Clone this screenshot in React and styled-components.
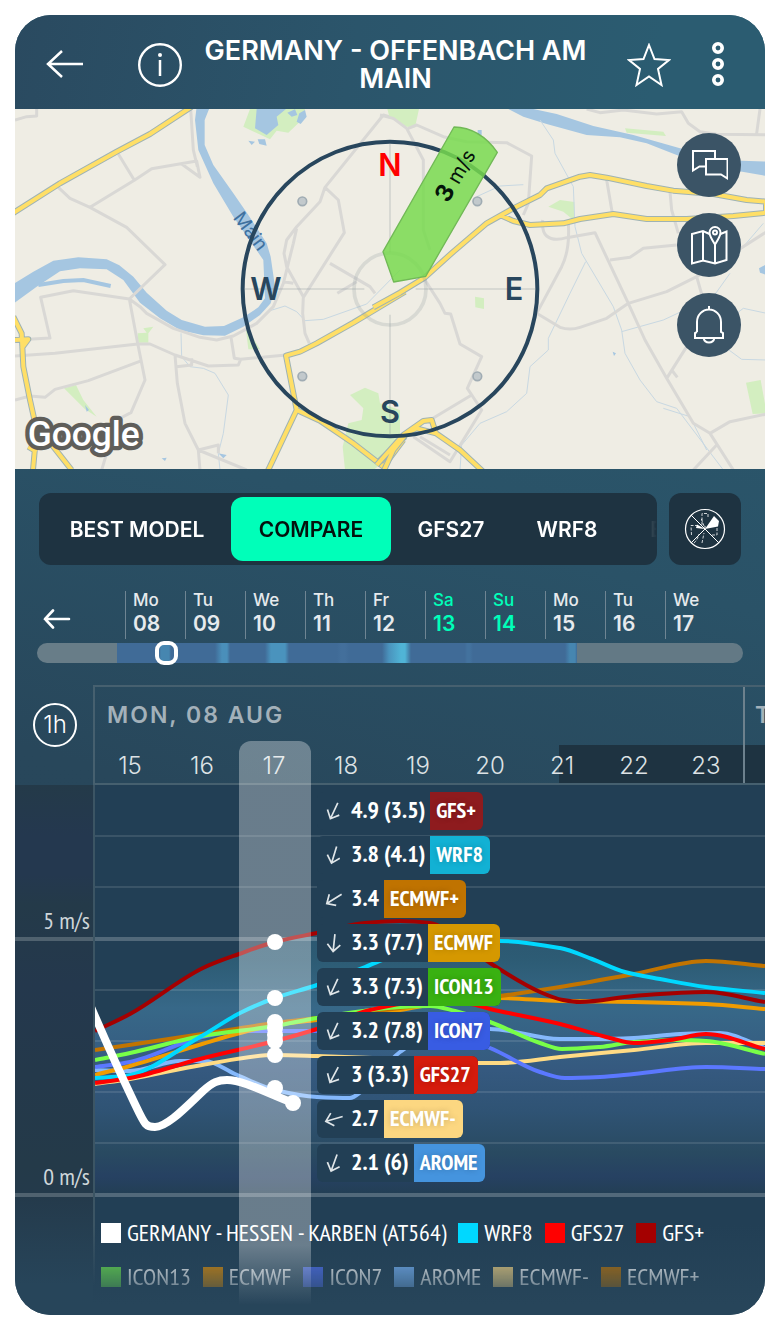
import React from "react";
import styled, { createGlobalStyle } from "styled-components";

const ui = `Inter, "Open Sans", "Liberation Sans", sans-serif`;
const narrow = `"PT Sans Narrow", "Liberation Sans Narrow", "Open Sans Condensed", "Roboto Condensed", "DejaVu Sans Condensed", sans-serif`;

const GlobalStyle = createGlobalStyle`
  *, *::before, *::after { box-sizing: border-box; }
  body { margin: 0; background: #fff; font-family: ${ui}; color: #fff; }
  button { font: inherit; color: inherit; background: none; border: 0; padding: 0; cursor: pointer; }
  svg { display: block; }
`;

const Page = styled.main`
  padding: 15px;
`;

const Card = styled.article`
  border-radius: 36px;
  overflow: hidden;
  background: linear-gradient(195deg, #2b5c71 0%, #2a5267 40%, #28475b 62%, #27455a 100%);
`;

/* ---------- header ---------- */

const Header = styled.header`
  display: flex;
  align-items: center;
  height: 94px;
  padding: 6px 25px 0 28px;
  background: linear-gradient(100deg, #2a4a60 0%, #2b556b 45%, #2b5c71 85%);
`;

const IconButton = styled.button`
  display: flex;
  align-items: center;
  justify-content: center;
  flex: none;
  width: 44px;
  height: 44px;
  margin-left: ${(p) => p.$gap || 0}px;
`;

const Title = styled.h1`
  flex: 1;
  margin: 0;
  padding: 0 34px 0 16px;
  font-size: 27px;
  line-height: 28px;
  font-weight: 600;
  text-align: center;
`;

/* ---------- map ---------- */

const MapPanel = styled.section`
  position: relative;
  height: 360px;
  background: #efede4;
  overflow: hidden;
`;

const MapSvg = styled.svg`
  width: 100%;
  height: 100%;
`;

const MapActions = styled.nav`
  position: absolute;
  top: 24px;
  right: 24px;
  display: flex;
  flex-direction: column;
  gap: 16px;
`;

const RoundButton = styled.button`
  display: flex;
  align-items: center;
  justify-content: center;
  width: 64px;
  height: 64px;
  border-radius: 50%;
  background: #3b5466;
`;

/* ---------- model tabs ---------- */

const ModelRow = styled.div`
  display: flex;
  gap: 12px;
  padding: 24px 24px 0;
`;

const ModelBar = styled.div`
  flex: 1;
  min-width: 0;
  height: 72px;
  padding: 4px;
  border-radius: 12px;
  background: #1e3341;
  overflow: hidden;
`;

const ModelTabs = styled.div`
  display: flex;
  height: 64px;
  margin-right: -4px;
  overflow: hidden;
  mask-image: linear-gradient(to right, #000 calc(100% - 56px), transparent 100%);
`;

const ModelTab = styled.button`
  flex: none;
  min-width: ${(p) => p.$min}px;
  padding: 0 20px;
  border-radius: 12px;
  font-size: 21px;
  font-weight: 600;
  text-align: center;
  white-space: nowrap;
  background: ${(p) => (p.$active ? "#00ffb9" : "none")};
  color: ${(p) => (p.$active ? "#04110d" : "#fff")};
`;

const RoseButton = styled.button`
  display: flex;
  align-items: center;
  justify-content: center;
  flex: none;
  width: 72px;
  height: 72px;
  border-radius: 12px;
  background: #1e3341;
`;

/* ---------- date strip ---------- */

const DateRow = styled.div`
  display: flex;
  align-items: flex-end;
  margin-top: 26px;
  padding-left: 20px;
`;

const PrevButton = styled(IconButton)`
  height: 40px;
`;

const Dates = styled.div`
  display: flex;
  margin-left: 46px;
`;

const DateButton = styled.button`
  display: flex;
  flex-direction: column;
  width: 60px;
  height: 48px;
  padding-left: 7px;
  border-left: 1px solid #6f8593;
  text-align: left;
  font-weight: 500;
  color: ${(p) => (p.$weekend ? "#00ffb9" : "#e6eaed")};
`;

const DayName = styled.span`
  font-size: 17px;
  line-height: 18px;
`;

const DayNumber = styled.span`
  font-size: 21px;
  font-weight: 600;
  line-height: 29px;
`;

const TimeSlider = styled.input`
  display: block;
  appearance: none;
  width: calc(100% - 44px);
  height: 20px;
  margin: 4px 22px 0;
  border-radius: 10px;
  background: linear-gradient(
    to right,
    #687d88 0 80px, #406b97 80px 122px, #4686b0 124px 132px, #406b97 134px 178px,
    #4a8fba 185px 190px, #406b97 193px 228px, #4a93bd 234px 248px, #406b97 252px 300px,
    #436f9b 304px 308px, #406b97 312px 345px, #4a93bd 352px, #50b4d6 364px 368px,
    #406b97 374px 428px, #43729e 430px 433px, #406b97 436px 528px, #4686b0 533px 538px,
    #406b97 540px, #637985 540px
  );

  &::-webkit-slider-thumb {
    appearance: none;
    width: 23px;
    height: 24px;
    border: 4px solid #fff;
    border-radius: 9px;
    background: transparent;
  }
`;

/* ---------- chart ---------- */

const Chart = styled.section`
  position: relative;
  display: grid;
  grid-template-columns: 78px 1fr;
  margin-top: 22px;
`;

const AxisColumn = styled.div`
  display: flex;
  flex-direction: column;
`;

const AxisTop = styled.div`
  height: 100px;
  padding: 18px 0 0 18px;
`;

const StepButton = styled.button`
  width: 44px;
  height: 44px;
  border: 2px solid #fff;
  border-radius: 50%;
  font-size: 24px;
  font-weight: 300;
  line-height: 40px;
`;

const AxisBody = styled.div`
  flex: 1;
  background: linear-gradient(to bottom, #243a49 0, #24384f 50px 90px, #243a49 120px, #24384d 200px, #243a49 380px, #243a4b 410px, #27455a 500px);
`;

const AxisBand = styled.div`
  display: flex;
  align-items: flex-end;
  justify-content: flex-end;
  height: ${(p) => p.$height}px;
  padding-right: 3px;
  border-bottom: 4px solid #50626f;
  font-family: ${narrow};
  font-size: 24px;
  line-height: 32px;
  color: #cfd6da;
`;

const ChartMain = styled.div`
  position: relative;
  min-width: 0;
  overflow: hidden;
`;

const Days = styled.div`
  display: flex;
  width: max-content;
  height: 60px;
  border-top: 2px solid #46606f;
  border-left: 2px solid #46606f;
`;

const Day = styled.h2`
  width: ${(p) => p.$hours * 72}px;
  height: 58px;
  margin: 0;
  padding-left: ${(p) => (p.$next ? 10 : 12)}px;
  border-left: ${(p) => (p.$next ? "2px solid #6d818d" : "0")};
  font-size: 23px;
  font-weight: 600;
  line-height: 56px;
  letter-spacing: 2px;
  color: #a3b1ba;
  white-space: nowrap;
`;

const Hours = styled.div`
  display: flex;
  width: max-content;
  height: 40px;
  border-left: 2px solid #46606f;
  border-bottom: 2px solid #46606f;
`;

const Hour = styled.div`
  width: 72px;
  padding-right: 2px;
  border-left: ${(p) => (p.$next ? "2px solid #6d818d" : "0")};
  background: ${(p) =>
    p.$night === "from" ? "linear-gradient(to right, transparent 32px, #1e3341 32px)" : p.$night ? "#1e3341" : "none"};
  font-size: 24px;
  font-weight: 300;
  line-height: 41px;
  text-align: center;
  color: #dde2e5;
`;

const PlotArea = styled.div`
  border-left: 2px solid;
  border-image: linear-gradient(to bottom, #3c5564 440px, transparent 500px) 1;
  background: linear-gradient(to bottom, #223f55 0 440px, #27455a 520px);
`;

const PlotSvg = styled.svg`
  width: 100%;
  height: 412px;
`;

const NowBar = styled.div`
  position: absolute;
  top: 56px;
  bottom: 10px;
  left: 146px;
  width: 72px;
  border-radius: 12px 12px 0 0;
  background: linear-gradient(to bottom, rgba(255, 255, 255, 0.32) calc(100% - 60px), transparent);
  pointer-events: none;
`;

const DotsSvg = styled.svg`
  position: absolute;
  top: 100px;
  left: 2px;
  width: 220px;
  height: 412px;
`;

const Readings = styled.ul`
  position: absolute;
  top: 107px;
  left: 224px;
  display: flex;
  flex-direction: column;
  align-items: flex-start;
  gap: 6px;
  margin: 0;
  padding: 0;
  list-style: none;
`;

const Reading = styled.li`
  display: flex;
  height: 38px;
  border-radius: 6px;
  overflow: hidden;
  background: #223f55;
  font-family: ${narrow};
  font-size: 24px;
  font-weight: 700;
  line-height: 36px;
  white-space: nowrap;
`;

const Arrow = styled.svg`
  flex: none;
  margin: 8px 6px;
  transform: rotate(${(p) => p.$angle}deg);
`;

const ReadingValue = styled.span`
  padding-right: 5px;
`;

const ModelTag = styled.span`
  padding: 0 7px 0 6px;
  font-size: 22px;
  background: ${(p) => p.$color};
  text-shadow: 0 0 6px rgba(0, 0, 0, 0.2);
`;

const Legend = styled.ul`
  display: flex;
  flex-wrap: wrap;
  column-gap: 12px;
  height: 44px;
  margin: 0;
  padding: 0 0 0 6px;
  list-style: none;
  overflow: hidden;
  font-family: ${narrow};
  font-size: 24px;
  line-height: 44px;
  ${(p) => p.$faded && "mask-image: linear-gradient(to bottom, rgba(0,0,0,.68) 10px, rgba(0,0,0,.32) 34px);"}
`;

const LegendWrap = styled.div`
  padding: 14px 0 16px;
`;

const LegendItem = styled.li`
  display: flex;
  align-items: center;
  gap: 6px;
  white-space: nowrap;
`;

const Swatch = styled.span`
  width: 20px;
  height: 20px;
  background: ${(p) => p.$color};
`;

/* ---------- data ---------- */

const dates = [
  ["Mo", "08"], ["Tu", "09"], ["We", "10"], ["Th", "11"], ["Fr", "12"],
  ["Sa", "13"], ["Su", "14"], ["Mo", "15"], ["Tu", "16"], ["We", "17"],
];

const hours = ["15", "16", "17", "18", "19", "20", "21", "22", "23", "00"];

const readings = [
  ["4.9 (3.5)", "GFS+", "#8e1b1e", 25],
  ["3.8 (4.1)", "WRF8", "#12b1d4", 17],
  ["3.4", "ECMWF+", "#c07300", 58],
  ["3.3 (7.7)", "ECMWF", "#d59800", 6],
  ["3.3 (7.3)", "ICON13", "#39b111", 25],
  ["3.2 (7.8)", "ICON7", "#385ce3", 25],
  ["3 (3.3)", "GFS27", "#d51b0c", 28],
  ["2.7", "ECMWF-", "#fcd781", 74],
  ["2.1 (6)", "AROME", "#4594de", 20],
];

const legendActive = [
  ["GERMANY - HESSEN - KARBEN (AT564)", "#ffffff"],
  ["WRF8", "#00d8ff"],
  ["GFS27", "#ff0000"],
  ["GFS+", "#a40000"],
];

const legendInactive = [
  ["ICON13", "#6ae04c"],
  ["ECMWF", "#dc8c08"],
  ["ICON7", "#5070f0"],
  ["AROME", "#78b4f8"],
  ["ECMWF-", "#f0d080"],
  ["ECMWF+", "#b87208"],
];

const gfsPlus = [[0, 246], [35, 229], [108, 183], [144, 169], [180, 157], [222, 148], [270, 138], [305, 136], [335, 138], [375, 163], [395, 178], [445, 207], [468, 215], [485, 217], [539, 211], [611, 207], [670, 217]];
const wrf8 = [[0, 293], [30, 291], [105, 252], [145, 228], [180, 213], [222, 200], [270, 182], [290, 174], [345, 159], [405, 156], [465, 163], [497, 174], [530, 187], [565, 194], [611, 202], [670, 208]];
const ecmwfPlus = [[0, 265], [107, 249], [180, 238], [222, 233], [305, 223], [405, 211], [465, 202], [539, 189], [611, 176], [670, 181]];

const series = [
  ["#84b8fc", [[0, 285], [35, 286], [85, 276], [110, 276], [140, 289], [180, 305], [222, 312], [255, 313], [267, 306], [305, 267], [335, 250], [395, 244], [465, 254], [505, 254], [539, 253], [585, 249], [625, 248], [670, 263]]],
  ["#ffdb84", [[0, 299], [35, 294], [107, 280], [180, 270], [222, 271], [305, 274], [382, 278], [405, 278], [465, 272], [539, 265], [611, 258], [670, 258]]],
  ["#5b78ff", [[0, 282], [35, 277], [107, 252], [145, 246], [180, 246], [222, 246], [325, 246], [375, 256], [395, 263], [445, 287], [470, 293], [505, 292], [539, 289], [611, 282], [670, 284]]],
  ["#f09b00", [[0, 290], [35, 281], [107, 259], [145, 248], [180, 240], [222, 235], [305, 225], [345, 218], [405, 213], [465, 216], [539, 217], [611, 219], [670, 224]]],
  ["#c27400", ecmwfPlus],
  ["#78ff48", [[0, 275], [35, 268], [107, 251], [180, 241], [222, 233], [305, 222], [335, 221], [360, 226], [395, 237], [445, 258], [467, 264], [505, 262], [539, 257], [585, 255], [611, 256], [670, 269]]],
  ["#00d8ff", wrf8],
  ["#ff0000", [[0, 298], [35, 293], [105, 274], [180, 256], [222, 244], [275, 225], [325, 217], [375, 219], [395, 224], [465, 239], [515, 253], [539, 258], [575, 255], [611, 249], [670, 264]]],
  ["#a40000", gfsPlus],
];

const envelope = [...gfsPlus.slice(0, 9), [350, 146], ...wrf8.slice(9, 13), ...ecmwfPlus.slice(7)];

const dots = [157, 213, 237, 243, 250, 256, 270, 303];

/* Monotone cubic curve through the points, so that flat stretches do not overshoot. */
function curve(points) {
  const n = points.length;
  const slope = [];
  for (let i = 0; i < n - 1; i++) {
    slope.push((points[i + 1][1] - points[i][1]) / (points[i + 1][0] - points[i][0]));
  }
  const tangent = points.map((_, i) => {
    if (i === 0) return slope[0];
    if (i === n - 1) return slope[n - 2];
    const a = slope[i - 1];
    const b = slope[i];
    return a * b <= 0 ? 0 : (2 * a * b) / (a + b);
  });
  let d = `M${points[0][0]} ${points[0][1]}`;
  for (let i = 0; i < n - 1; i++) {
    const [x0, y0] = points[i];
    const [x1, y1] = points[i + 1];
    const h = (x1 - x0) / 3;
    d += `C${x0 + h} ${y0 + tangent[i] * h} ${x1 - h} ${y1 - tangent[i + 1] * h} ${x1} ${y1}`;
  }
  return d;
}

/* ---------- map drawing ---------- */

const westRoads = `M45 60L80 50L110 48V27M175 262L210 295L270 322L380 382L495 494L388 597L420 620L440 640L520 685L600 712L650 720L700 708L770 670L820 620L850 550L880 430L890 385M270 322L403 241L355 162M403 241L455 206L590 183L600 232L545 192M572 27L580 150L592 200
M388 597L220 572L122 592L150 714L85 718M388 597L413 730L435 840L393 938L350 960L305 1110M45 768L165 760L413 732L450 732L525 765L625 798L715 795L722 778L858 765M722 778L703 775L693 712M525 765L532 850L555 970L595 1050L600 1110M530 800L575 795V775M45 900L90 888L135 892L165 868L265 842L425 782
M595 1050L655 1035V1060M595 1050L740 1110M1200 60L1150 45L975 262L960 305L890 380L860 420L852 460L860 500L910 590L908 640L915 700L928 730M975 262L1015 300L1033 398L910 592M850 545L880 550M990 490L1110 560L1125 580M1012 580L1070 545`;

const eastRoads = `M0 45L40 55L80 85L130 180V390L150 450M85 85L110 75L190 110L260 125L380 128L455 168L445 310L430 345M680 240L697 340M870 275L875 330L895 400M620 27L660 38L730 30L830 42L905 35L925 70L960 95L1010 103L1160 104M1140 27L1130 100
M488 360Q485 395 500 408Q520 425 560 413L645 398L745 610L795 720L860 835L940 970L990 1000L1060 1110M565 370Q570 450 545 500L470 640L540 682Q570 692 600 682L680 655L745 610L860 575L950 530L1160 395M690 480L750 472L790 445L890 435M950 530L970 600L920 740L860 835M875 810L892 832
M990 1000L1050 965L1160 942M1010 1035L940 1110M135 540L180 610L195 640L212 642L240 732L305 770L262 865L305 930L210 1085L100 1010M275 885L150 960M120 1010L210 1065`;

const westYellow = `M30 345L180 250L350 155L450 102L575 20M40 650L65 700L70 800L90 900L110 990L98 1120M110 990L160 1040L215 1110M45 720L85 718L65 745M85 1040L110 1055M800 1120L890 930L858 767L900 755L950 730L1060 668L1215 575M890 930L960 962L1060 1030L1150 1100L1210 1020M1130 1090L1215 1010`;

const eastYellow = `M-20 622L60 578L135 532L220 455L320 370L400 325L480 285L500 265L600 230L630 225L680 233L800 258L880 272L1000 282L1100 300L1160 305M360 345L400 363L450 375L550 370L600 357L700 342L800 357L920 357L1060 348L1160 338M1158 305V338M-10 1095L70 1005L130 963L155 960L168 1000L240 1050L315 1120M70 1005L110 985L168 1000M8 1120L40 1050L80 1000`;

function Roads({ gray, yellow }) {
  return (
    <g fill="none" strokeLinejoin="round">
      <path d={gray} stroke="#d9d8d5" strokeWidth="9" />
      <path d={yellow} stroke="#9fb3b4" strokeWidth="18" />
      <path d={yellow} stroke="#ffdf66" strokeWidth="12" />
    </g>
  );
}

function MapDrawing() {
  return (
    <MapSvg viewBox="0 0 2250 1080" preserveAspectRatio="xMidYMid slice" role="img" aria-label="Map with wind compass">
      <g transform="translate(-45 -27)">
        <path
          fill="#d3eec0"
          d="M750 27L730 80L810 118L830 92L865 98L905 60L915 27ZM192 865L228 855L250 900L290 950L255 928ZM413 700L440 698L430 685L460 680L445 700V728H415ZM738 690L760 715L780 748H745ZM1050 885L1095 863L1135 880L1140 910L1200 930V1010L1140 1095L1120 1110H1035L1028 1040L1045 970L1085 960L1090 925Z"
        />
        <path fill="#a5c6e1" d="M770 27L765 85L800 105L835 75L830 50L858 27ZM862 38L885 28L892 45L875 50ZM898 40L915 30L920 50L902 72L890 65ZM745 122L765 125L755 135ZM773 118L795 118L800 137L778 132ZM485 1075L500 1073L495 1083ZM655 1060L680 1065L670 1075ZM255 915L267 930L260 935Z" />
        <path fill="#a5c6e1" d="M30 558L100 515L160 482L235 472L320 478L358 496L400 530L440 578L500 632L545 660L615 680L672 678L730 652L775 622L795 595L790 480L700 350L640 250L595 150L585 60L590 20L630 20L614 60V135L640 195L700 280L745 345L800 430L812 470L825 560L812 610L780 645L730 680L675 707L610 706L540 690L480 655L420 608L370 540L320 508L240 505L180 514L110 560L30 618Z" />
        <path fill="none" stroke="#a5c6e1" strokeWidth="12" d="M115 555L190 543L250 540L332 558" />
        <path fill="none" stroke="#c8d8e2" strokeWidth="3" d="M810 632L855 618L890 635L915 662L970 658L1100 612L1200 510M543 700L545 770L570 800L610 805L645 820L685 885L670 1000L655 1060L660 1110" />
        <Roads gray={westRoads} yellow={westYellow} />
        <text x="750" y="412" transform="rotate(53 750 395)" textAnchor="middle" fontFamily="Roboto, sans-serif" fontSize="58" fill="#3f719f">Main</text>
      </g>
      <g transform="translate(1095 -27)">
        <path fill="#d3eec0" d="M22 27H117L105 82L80 80L28 50ZM505 320L540 300L583 306V362L550 335ZM735 85L850 95L858 108L740 98ZM285 590L312 595V627L286 622ZM1098 848L1142 840L1160 940L1118 942ZM0 935L50 960L60 1000L0 1010Z" />
        <path fill="#a5c6e1" d="M385 27L430 50L500 72L620 105L720 112L800 130L890 165L1000 200L1160 228V185L1085 182L900 145L760 105L640 78L530 42L460 27ZM1137 505L1160 492V525L1140 518ZM698 755L708 760L702 768ZM293 90H305V105H293Z" />
        <path
          fill="none"
          stroke="#c8d8e2"
          strokeWidth="3"
          d="M480 60L520 120L525 160L580 260L585 380L605 460L700 620L725 690L735 760L780 840L830 905L890 925L1030 1110M617 485L570 580L505 715V750L450 800L440 880L380 935L300 970L245 1035L240 1110M725 695L850 660L1000 590L1050 520M850 925L930 950L980 1050M1030 620L1070 640L1090 625L1160 640M1040 745L1085 778L1160 780M1090 440L1150 370M290 290L360 258L430 254"
        />
        <Roads gray={eastRoads} yellow={eastYellow} />
      </g>

      <g fill="none" stroke="#8f99a0" strokeOpacity="0.24" strokeWidth="6">
        <path d="M1125 105V430M1125 617V975M690 540H1048M1202 540H1560" />
        <circle cx="1125" cy="540" r="108" strokeWidth="11" />
      </g>
      <g fill="#c2c9cc" stroke="#a0acb3" strokeWidth="5">
        <circle cx="862" cy="277" r="13" />
        <circle cx="1387" cy="277" r="13" />
        <circle cx="862" cy="802" r="13" />
        <circle cx="1387" cy="802" r="13" />
      </g>
      <circle cx="1125" cy="540" r="442" fill="none" stroke="#28465d" strokeWidth="12" />
      <g fontFamily={ui} fontSize="92" fontWeight="600" fill="#28465d" textAnchor="middle">
        <text x="1125" y="200" fill="#ff0000">N</text>
        <text x="1125" y="941">S</text>
        <text x="753" y="573">W</text>
        <text x="1497" y="573">E</text>
      </g>
      <path d="M1317 54Q1395 56 1447 130L1232 502L1136 519L1104 428Z" fill="#77da4d" fillOpacity="0.84" stroke="#71b956" strokeWidth="4" strokeLinejoin="round" />
      <text x="1299" y="284" transform="rotate(-60 1299 284)" fontFamily={ui} fontSize="72" fontWeight="700" fill="#05140a">
        3
        <tspan fontFamily={ui} fontSize="60" fontWeight="400"> m/s</tspan>
      </text>
      <text x="38" y="1012" fontFamily="Roboto, sans-serif" fontSize="106" fontWeight="500" fill="#fff" stroke="#5f5e5a" strokeWidth="26" strokeLinejoin="round" paintOrder="stroke">Google</text>
    </MapSvg>
  );
}

/* ---------- icons ---------- */

const line = { fill: "none", stroke: "#fff", strokeWidth: 2 };

const BackIcon = () => (
  <svg width="38" height="30" viewBox="0 0 38 30" {...line} strokeWidth="2.5">
    <path d="M37 14H2M16 1L2 14L16 27" />
  </svg>
);

const InfoIcon = () => (
  <svg width="44" height="44" viewBox="0 0 44 44" {...line} strokeWidth="2.400">
    <circle cx="22" cy="22" r="20.800" />
    <path d="M22 17V33" strokeWidth="2.5" />
    <circle cx="22" cy="12" r="2" fill="#fff" stroke="none" />
  </svg>
);

const StarIcon = () => (
  <svg width="44" height="44" viewBox="0 0 44 44" {...line}>
    <path d="M22 2L27.500 16L42 17L31 26L34.500 42L22 33.500L9.500 42L13 26L2 17L16.500 16Z" strokeLinejoin="miter" />
  </svg>
);

const MoreIcon = () => (
  <svg width="14" height="46" viewBox="0 0 14 46" fill="none" stroke="#fff" strokeWidth="3.600">
    <circle cx="7" cy="6" r="4.200" />
    <circle cx="7" cy="22" r="4.200" />
    <circle cx="7" cy="38" r="4.200" />
  </svg>
);

const ChatIcon = () => (
  <svg width="38" height="32" viewBox="0 0 38 32" {...line}>
    <path d="M15 15.500H10L3 19V0.500V-1M3 19.500V1H25V8.500" stroke="none" />
    <path d="M15 17.500H9.500L3 21.500V2H25V10" />
    <path d="M16 10H37.500V29.500L31 25.500H16Z" />
  </svg>
);

const MapIcon = () => (
  <svg width="38" height="40" viewBox="0 0 38 40" {...line}>
    <path d="M19.500 9L13 6L2 9V38.500L13 35.500L25 38.500L36.500 35V6.500L30.500 9M13 6V35.500M25 20V38.500" />
    <path d="M25 19.500Q19.500 11 19.500 7.500A5.500 5.500 0 0 1 30.500 7.500Q30.500 11 25 19.500Z" />
    <circle cx="25" cy="7.500" r="2" />
  </svg>
);

const BellIcon = () => (
  <svg width="32" height="40" viewBox="0 0 32 40" {...line}>
    <path d="M16 1V5M4 27V17A12 12.500 0 0 1 28 17V27L30 28V33H2V28L4 27M10.500 33C12 39 20 39 21.500 33" />
  </svg>
);

const RoseIcon = () => (
  <svg width="42" height="42" viewBox="0 0 42 42" fill="none" stroke="#fff" strokeWidth="1.200">
    <circle cx="21" cy="21" r="19.500" />
    <path d="M21 21L7 7M21 21L35 35M21 21L7 35M21 21V18" strokeWidth="1" />
    <path d="M18 17V5.500H24V9M20 18L17 10M14 17.500H7L7.500 27M10 35Q14 31 15 26M18 35L20 25M33 20V27H28" strokeWidth="0.800" strokeDasharray="3 1.500" />
    <path d="M21 21L30 8L35 13L34 18.500ZM21 21L12 20L13 16.500Z" fill="#fff" stroke="none" />
  </svg>
);

const PrevIcon = () => (
  <svg width="28" height="20" viewBox="0 0 28 20" {...line} strokeWidth="2.600" strokeLinecap="round">
    <path d="M26 10H2M10 1.500L2 10L10 18.500" />
  </svg>
);

function WindArrow({ angle }) {
  return (
    <Arrow $angle={angle} width="22" height="22" viewBox="0 0 22 22" fill="none" stroke="#dfe5e8" strokeWidth="1.700">
      <path d="M11 2V19M4.500 12.500L11 19.500L17.500 12.500" />
    </Arrow>
  );
}

function Plot() {
  return (
    <PlotSvg role="img" aria-label="Wind speed forecast by model">
      <defs>
        <linearGradient id="area" gradientUnits="userSpaceOnUse" x1="0" y1="136" x2="0" y2="408">
          <stop offset="0" stopColor="#2b556e" />
          <stop offset="0.150" stopColor="#2d5c75" />
          <stop offset="0.320" stopColor="#376888" />
          <stop offset="0.550" stopColor="#35597f" />
          <stop offset="0.700" stopColor="#2f5374" />
          <stop offset="0.850" stopColor="#294a61" />
          <stop offset="0.940" stopColor="#264162" />
          <stop offset="1" stopColor="#233f55" />
        </linearGradient>
      </defs>
      <path d={`${curve(envelope)}V408H0Z`} fill="url(#area)" />
      <g fill="#fff" fillOpacity="0.110">
        {[51, 102, 205, 256, 307, 358].map((y) => (
          <rect key={y} x="0" y={y - 1} width="100%" height="2" />
        ))}
      </g>
      <g fill="#fff" fillOpacity="0.220">
        <rect y="152" width="100%" height="4" />
        <rect y="408" width="100%" height="4" />
      </g>
      <g fill="none" strokeWidth="4">
        {series.map(([color, points]) => (
          <path key={color} d={curve(points)} stroke={color} />
        ))}
      </g>
    </PlotSvg>
  );
}

function LegendRow({ items, faded }) {
  return (
    <Legend $faded={faded}>
      {items.map(([name, color]) => (
        <LegendItem key={name}>
          <Swatch $color={color} />
          {name}
        </LegendItem>
      ))}
    </Legend>
  );
}

export default function App() {
  return (
    <Page>
      <GlobalStyle />
      <Card>
        <Header>
          <IconButton aria-label="Back"><BackIcon /></IconButton>
          <IconButton aria-label="Info" $gap={51}><InfoIcon /></IconButton>
          <Title>GERMANY - OFFENBACH AM MAIN</Title>
          <IconButton aria-label="Favourite"><StarIcon /></IconButton>
          <IconButton aria-label="More" $gap={25}><MoreIcon /></IconButton>
        </Header>

        <MapPanel>
          <MapDrawing />
          <MapActions>
            <RoundButton aria-label="Chat"><ChatIcon /></RoundButton>
            <RoundButton aria-label="Map"><MapIcon /></RoundButton>
            <RoundButton aria-label="Alerts"><BellIcon /></RoundButton>
          </MapActions>
        </MapPanel>

        <ModelRow>
          <ModelBar>
            <ModelTabs>
              <ModelTab $min={188}>BEST MODEL</ModelTab>
              <ModelTab $min={160} $active>COMPARE</ModelTab>
              <ModelTab $min={120}>GFS27</ModelTab>
              <ModelTab $min={112}>WRF8</ModelTab>
              <ModelTab $min={136}>ECMWF</ModelTab>
            </ModelTabs>
          </ModelBar>
          <RoseButton aria-label="Wind statistics"><RoseIcon /></RoseButton>
        </ModelRow>

        <DateRow>
          <PrevButton aria-label="Previous"><PrevIcon /></PrevButton>
          <Dates>
            {dates.map(([name, number]) => (
              <DateButton key={number} $weekend={name === "Sa" || name === "Su"}>
                <DayName>{name}</DayName>
                <DayNumber>{number}</DayNumber>
              </DateButton>
            ))}
          </Dates>
        </DateRow>
        <TimeSlider type="range" min="0" max="1000" defaultValue="173" aria-label="Forecast time" />

        <Chart>
          <AxisColumn>
            <AxisTop>
              <StepButton>1h</StepButton>
            </AxisTop>
            <AxisBody>
              <AxisBand $height={156}>5 m/s</AxisBand>
              <AxisBand $height={256}>0 m/s</AxisBand>
            </AxisBody>
          </AxisColumn>
          <ChartMain>
            <Days>
              <Day $hours={9}>MON, 08 AUG</Day>
              <Day $hours={2} $next>TUE, 09 AUG</Day>
            </Days>
            <Hours>
              {hours.map((h) => (
                <Hour key={h} $next={h === "00"} $night={h === "21" ? "from" : ["22", "23", "00"].includes(h)}>
                  {h}
                </Hour>
              ))}
            </Hours>
            <PlotArea>
              <Plot />
              <LegendWrap>
                <LegendRow items={legendActive} />
                <LegendRow items={legendInactive} faded />
              </LegendWrap>
            </PlotArea>
            <NowBar />
            <DotsSvg aria-hidden="true">
              <path d="M-4 222C14 264 26 290 38 315S50 342 60 342C72 342 90 323 108 306C118 297 123 295 132 295C148 295 172 308 198 318" fill="none" stroke="#fff" strokeWidth="8" />
              <g fill="#fff">
                {dots.map((y) => (
                  <circle key={y} cx="180" cy={y} r="8" />
                ))}
                <circle cx="198" cy="318" r="8" />
              </g>
            </DotsSvg>
            <Readings>
              {readings.map(([value, model, color, angle]) => (
                <Reading key={model}>
                  <WindArrow angle={angle} />
                  <ReadingValue>{value}</ReadingValue>
                  <ModelTag $color={color}>{model}</ModelTag>
                </Reading>
              ))}
            </Readings>
          </ChartMain>
        </Chart>
      </Card>
    </Page>
  );
}
